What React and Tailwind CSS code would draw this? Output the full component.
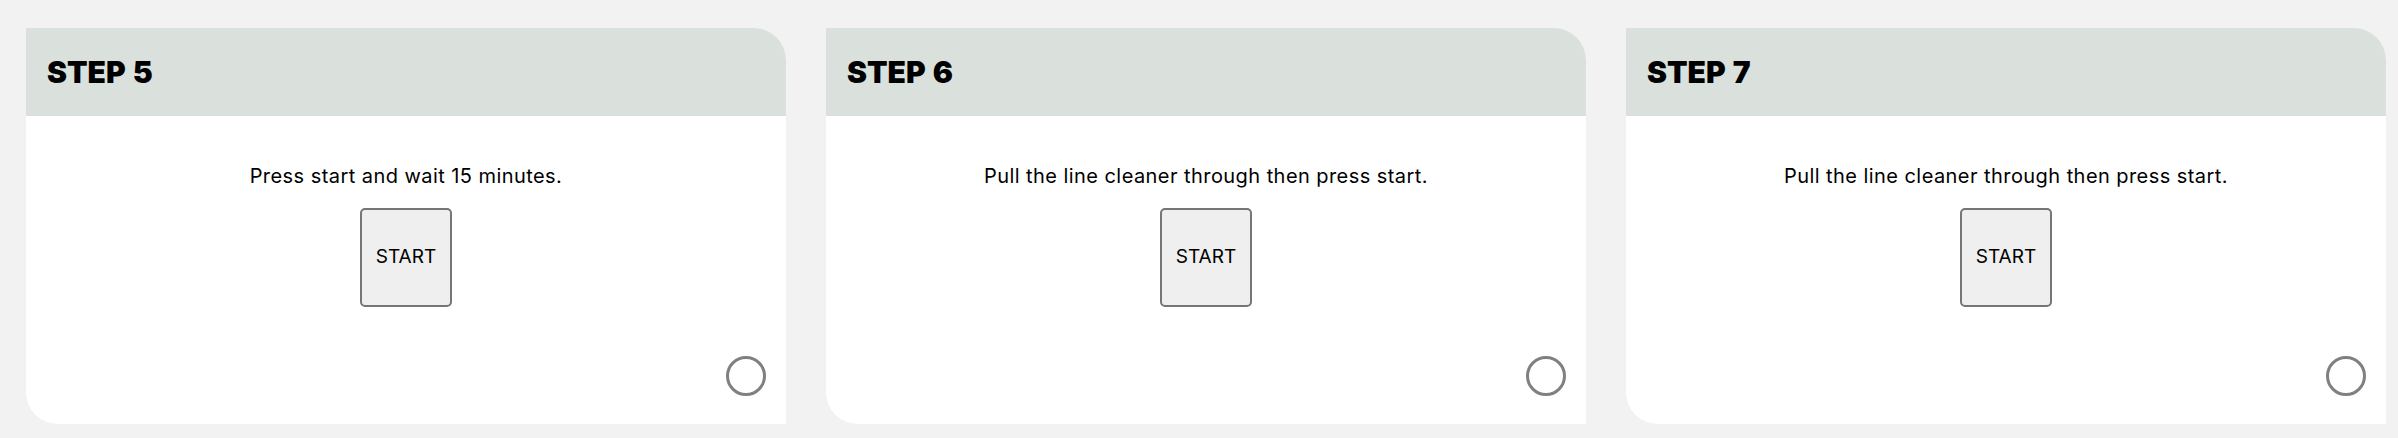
import React from "react";

const steps = [
  { n: 5, text: "Press start and wait 15 minutes." },
  { n: 6, text: "Pull the line cleaner through then press start." },
  { n: 7, text: "Pull the line cleaner through then press start." },
];

const StepCard = ({ step }) => {
  return (
    <div className="w-[760px] shrink-0 h-[396px] flex flex-col bg-white rounded-tr-[32px] rounded-bl-[32px] overflow-hidden">
      <div className="h-[88px] shrink-0 bg-[#dae1dc] flex items-center px-[21px]">
        <h2 className="text-[30px] font-black text-black leading-none font-['Inter',sans-serif] [word-spacing:1px]">
          STEP {step.n}
        </h2>
      </div>
      <div className="flex-1 flex flex-col items-center px-[20px] pt-[45px] pb-[28px]">
        <p className="text-[20px] leading-[30px] tracking-[0.022em] text-black font-['Inter',sans-serif]">
          {step.text}
        </p>
        <button className="mt-[17px] w-[92px] h-[99px] bg-[#efefef] border-2 border-[#767676] rounded-[5px] text-[19px] text-black font-['Inter',sans-serif]">
          START
        </button>
        <div className="mt-auto self-end w-[40px] h-[40px] rounded-full border-[3px] border-[#808080]" />
      </div>
    </div>
  );
};

export default function App() {
  return (
    <div className="h-[438px] w-full bg-[#f2f2f2] flex gap-[40px] pl-[26px] pt-[28px] overflow-hidden">
      {steps.map(step => (
        <StepCard key={step.n} step={step} />
      ))}
    </div>
  );
}
